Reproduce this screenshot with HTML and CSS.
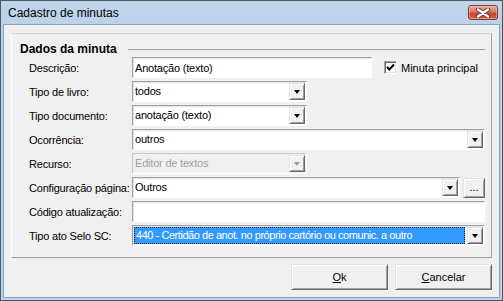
FILE: index.html
```html
<!doctype html>
<html>
<head>
<meta charset="UTF-8">
<title>Cadastro de minutas</title>
<link rel="stylesheet" href="styles.css">
</head>
<body>
<div class="window">
  <div class="titlebar">
    <span class="title">Cadastro de minutas</span>
    <span class="close">
      <svg width="16" height="10" viewBox="0 0 16 10">
        <path d="M3 1.5 L13 8.5 M13 1.5 L3 8.5" stroke="#5a3a36" stroke-width="4.2" stroke-linecap="round"/>
        <path d="M3 1.5 L13 8.5 M13 1.5 L3 8.5" stroke="#fff" stroke-width="2.4" stroke-linecap="round"/>
      </svg>
    </span>
  </div>

  <div class="client">
    <div class="group">
      <div class="ghead"><span>Dados da minuta</span><i class="rule"></i></div>

      <div class="form">
        <label>Descrição:</label>
        <div class="line">
          <div class="field w-edit">Anotação (texto)</div>
          <span class="check"><span class="box"><svg width="9" height="9" viewBox="0 0 9 9"><path d="M1 4 L3.3 6.5 L8 1.5" fill="none" stroke="#000" stroke-width="2"/></svg></span>Minuta principal</span>
        </div>

        <label>Tipo de livro:</label>
        <div class="field combo w-short"><span class="val">todos</span><span class="drop"><i class="tri"></i></span></div>

        <label>Tipo documento:</label>
        <div class="field combo w-short"><span class="val">anotação (texto)</span><span class="drop"><i class="tri"></i></span></div>

        <label>Ocorrência:</label>
        <div class="field combo"><span class="val">outros</span><span class="drop"><i class="tri"></i></span></div>

        <label>Recurso:</label>
        <div class="field combo w-short disabled"><span class="val">Editor de textos</span><span class="drop"><i class="tri"></i></span></div>

        <label>Configuração página:</label>
        <div class="line">
          <div class="field combo grow"><span class="val">Outros</span><span class="drop"><i class="tri"></i></span></div>
          <span class="dots">...</span>
        </div>

        <label>Código atualização:</label>
        <div class="field"></div>

        <label>Tipo ato Selo SC:</label>
        <div class="field combo focus"><span class="val">440 - Certidão de anot. no próprio cartório ou comunic. a outro</span><span class="drop"><i class="tri"></i></span></div>
      </div>
    </div>

    <div class="actions">
      <button class="btn"><u>O</u>k</button>
      <button class="btn"><u>C</u>ancelar</button>
    </div>
  </div>
</div>
</body>
</html>
```

FILE: styles.css
```css
body { margin: 0; font: 11px "Liberation Sans", Arial, sans-serif; color: #000; }

.window { width: 503px; height: 301px; box-sizing: border-box; border: 1px solid #4b5968; background: #bdd3ea; display: flex; flex-direction: column; }

.titlebar { height: 23px; flex: none; display: flex; align-items: center; padding: 0 4px 0 7px; background: linear-gradient(#c1d5eb, #bcd2ea); }
.title { flex: 1; font-size: 12px; color: #000; }
.close { width: 30px; height: 15px; box-sizing: border-box; border: 1px solid #8b3427; border-radius: 3px; background: linear-gradient(#e9a99a, #d77b66 45%, #c4452f 55%, #d0634c); display: flex; align-items: center; justify-content: center; box-shadow: inset 0 0 0 1px rgba(255,255,255,0.35); }
.close svg { display: block; }

.client { flex: 1; margin: 0 2px 2px; border: 1px solid #8ba2bd; background: #f0f0f0; display: flex; flex-direction: column; padding: 8px 7px 7px; letter-spacing: -0.2px; }

.group { height: 225px; flex: none; box-sizing: border-box; border: 1px solid; border-color: #d5d5d5 #a0a0a0 #a0a0a0 #fff; padding: 8px 6px 0 8px; }
.ghead { display: flex; align-items: center; height: 14px; margin-bottom: 1px; font-size: 12px; font-weight: bold; letter-spacing: 0; }
.ghead .rule { flex: 1; border-top: 1px solid #a0a0a0; margin-left: 11px; }

.form { display: grid; grid-template-columns: 103px 1fr; grid-auto-rows: 21px; row-gap: 3px; padding-left: 9px; align-items: center; }
.form label { white-space: nowrap; }
.line { display: flex; align-items: center; height: 21px; }

.field { height: 21px; box-sizing: border-box; background: #fff; border: 1px solid; border-color: #a0a0a0 #fff #fff #a0a0a0; box-shadow: inset 1px 1px #e3e3e3; display: flex; align-items: center; padding-left: 2px; white-space: nowrap; overflow: hidden; }
.w-edit { width: 240px; }
.w-short { width: 175px; }
.grow { flex: 1; }

.combo { padding: 1px; }
.combo .val { flex: 1; padding-left: 1px; height: 17px; line-height: 17px; overflow: hidden; }
.drop { flex: none; width: 16px; height: 17px; box-sizing: border-box; background: #f0f0f0; border: 1px solid; border-color: #e3e3e3 #696969 #696969 #e3e3e3; box-shadow: inset 1px 1px #fff, inset -1px -1px #a0a0a0; display: flex; align-items: center; justify-content: center; }
.tri { width: 0; height: 0; border-left: 3.5px solid transparent; border-right: 3.5px solid transparent; border-top: 4px solid #000; }

.disabled { background: #f0f0f0; border-color: #c8c8c8 #fff #fff #c8c8c8; box-shadow: none; color: #a0a0a0; }
.disabled .tri { border-top-color: #a0a0a0; }

.focus .val { background: #3399ff; color: #fff; outline: 1px dotted #222; outline-offset: -1px; padding-left: 2px; margin-right: 2px; letter-spacing: -0.45px; }

.check { display: flex; align-items: center; margin-left: 12px; white-space: nowrap; letter-spacing: 0; }
.check .box { width: 13px; height: 13px; box-sizing: border-box; background: #fff; border: 1px solid; border-color: #a0a0a0 #fff #fff #a0a0a0; box-shadow: inset 1px 1px #696969, inset -1px -1px #e3e3e3; display: flex; align-items: center; justify-content: center; margin-right: 4px; }
.check svg { display: block; }

.dots { width: 22px; height: 20px; margin-left: 3px; box-sizing: border-box; background: #f0f0f0; border: 1px solid; border-color: #e3e3e3 #696969 #696969 #e3e3e3; box-shadow: inset 1px 1px #fff, inset -1px -1px #a0a0a0; text-align: center; line-height: 16px; letter-spacing: 0; }

.actions { display: flex; justify-content: flex-end; gap: 7px; margin-top: 6px; }
.btn { width: 97px; height: 26px; box-sizing: border-box; background: #f0f0f0; border: 1px solid; border-color: #e3e3e3 #696969 #696969 #e3e3e3; box-shadow: inset 1px 1px #fff, inset -1px -1px #a0a0a0; font: 11px "Liberation Sans", Arial, sans-serif; color: #000; padding: 0; }
```
